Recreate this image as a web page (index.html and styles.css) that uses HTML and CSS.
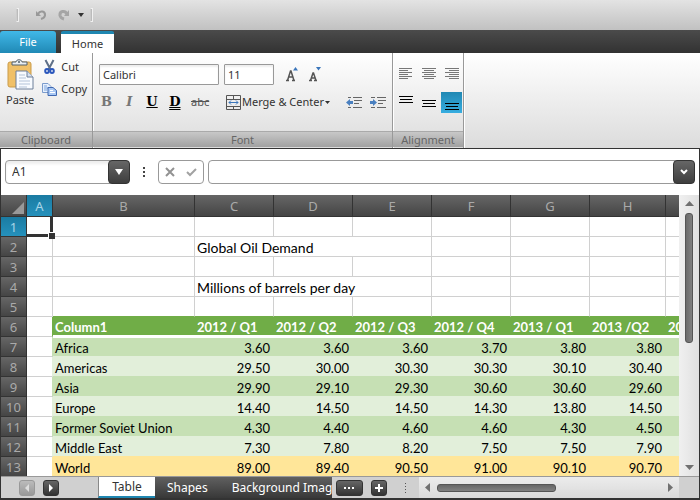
FILE: index.html
```
<!DOCTYPE html>
<html lang="en">
<head>
<meta charset="utf-8">
<title>Spreadsheet</title>
<link rel="stylesheet" href="styles.css">
</head>
<body>
<header class="quickbar">
  <span class="grip"></span>
  <button class="plain" aria-label="Undo"><svg width="12" height="12" viewBox="0 0 12 12"><path d="M1 2v5h5z" fill="#999"/><path d="M3 5C5 1 10.500 2 10 6.500c-.5 2-2 3-4 3.500" fill="none" stroke="#999" stroke-width="2"/></svg></button>
  <button class="plain" aria-label="Redo"><svg width="12" height="12" viewBox="0 0 12 12"><path d="M11 1v6H6z" fill="#a5a5a5"/><path d="M9 5C7 1 1.500 2 2 6.500c.5 2 2 3 4 3.500" fill="none" stroke="#a5a5a5" stroke-width="3"/></svg></button>
  <button class="plain more" aria-label="Customize"><svg width="6" height="4" viewBox="0 0 6 4"><path d="M0 0h6L3 4z" fill="#333"/></svg></button>
  <span class="grip"></span>
</header>
<nav class="tabs">
  <button class="file">File</button>
  <button class="home">Home</button>
</nav>
<section class="ribbon">
  <div class="group">
    <div class="tools clipboard">
      <button class="plain paste">
        <svg width="27" height="31" viewBox="0 0 27 31"><rect x="1" y="3" width="23" height="25" rx="2" fill="#f0c067" stroke="#c99b4b"/><path d="M5 6V3h4c0-3 6-3 6 0h5v3z" fill="#e8edf0" stroke="#53616c"/><circle cx="12" cy="3" r="1" fill="#53616c"/><path d="M9 12h11l6 6v12H9z" fill="#f8fbff" stroke="#6c7f99"/><path d="M20 12v6h6" fill="#d5e0ee" stroke="#6c7f99"/><path d="M12 16h6M12 19h7M12 22h11M12 25h11M12 28h8" stroke="#b3c3d8"/></svg>
        <span>Paste</span>
      </button>
      <div class="stack">
        <button class="plain"><svg width="15" height="16" viewBox="0 0 15 16"><path d="M3.500 1l5 9.500M11.500 1L6.500 10.500" stroke="#5f7088" stroke-width="2"/><ellipse cx="5" cy="12" rx="1.800" ry="2" fill="none" stroke="#2b57bc" stroke-width="2"/><ellipse cx="10" cy="12" rx="1.800" ry="2" fill="none" stroke="#2b57bc" stroke-width="2"/></svg>Cut</button>
        <button class="plain"><svg width="15" height="16" viewBox="0 0 15 16"><path d="M.5 2.500h5.500l3 3v6H.5z" fill="#e7f0fd" stroke="#7c9ccc"/><path d="M2 5h3M2 7h4M2 9h3" stroke="#7ba3dc"/><path d="M6 6.500h5l3.500 3v5H6z" fill="#a9c8f4" stroke="#3f68b1"/><path d="M8 9.500h3M8 11.500h5" stroke="#fff"/></svg>Copy</button>
      </div>
    </div>
    <div class="caption">Clipboard</div>
  </div>
  <div class="group">
    <div class="tools font">
      <div class="row">
        <input class="field family" aria-label="Font family" value="Calibri">
        <input class="field size" aria-label="Font size" value="11">
        <button class="plain" aria-label="Grow font"><svg width="13" height="15" viewBox="0 0 13 15"><path d="M1.500 13.500L4.500 4h.5l3 9.500M2.500 10h5M0 13.500h3M6 13.500h3" fill="none" stroke="#555" stroke-width="1.500"/><path d="M7 3.500L9.500 0 12 3.500z" fill="#3b76bb"/></svg></button>
        <button class="plain shrink" aria-label="Shrink font"><svg width="13" height="15" viewBox="0 0 13 15"><path d="M1.500 13.500L4 6h.5l2.500 7.500M2 11h4M0 13.500h3M5 13.500h3" fill="none" stroke="#555" stroke-width="1.500"/><path d="M7 0h5L9.500 3.500z" fill="#3b76bb"/></svg></button>
      </div>
      <div class="row styles">
        <button class="plain serif gray">B</button>
        <button class="plain serif gray italic">I</button>
        <button class="plain serif under">U</button>
        <button class="plain serif double">D</button>
        <button class="plain strike">abc</button>
        <button class="plain merge"><svg width="15" height="15" viewBox="0 0 15 15"><path d="M.5.5h14v14H.5zM0 4.500h15M0 11.500h15M7.500 0v4M7.500 11v4" fill="none" stroke="#555"/><path d="M3 7.500h9M5 5.500l-2 2 2 2M10 5.500l2 2-2 2" fill="none" stroke="#3b76bb"/></svg>Merge &amp; Center<svg width="5" height="3" viewBox="0 0 5 3"><path d="M0 0h5L2.500 3z" fill="#333"/></svg></button>
        <button class="plain" aria-label="Decrease indent"><svg width="16" height="11" viewBox="0 0 16 11"><path d="M2 .5h3M7 .5h9M8 3.500h8M8 6.500h5M2 10.500h3M7 10.500h9" stroke="#666"/><path d="M0 5.500L4 2v2h3v3H4v2z" fill="#4a80c0"/></svg></button>
        <button class="plain" aria-label="Increase indent"><svg width="16" height="11" viewBox="0 0 16 11"><path d="M1 .5h4M7 .5h9M8 3.500h8M8 6.500h5M1 10.500h4M7 10.500h9" stroke="#666"/><path d="M7 5.500L3 2v2H0v3h3v2z" fill="#4a80c0"/></svg></button>
      </div>
    </div>
    <div class="caption">Font</div>
  </div>
  <div class="group">
    <div class="tools align">
      <button class="plain" aria-label="Align left"><svg width="14" height="11" viewBox="0 0 14 11"><path d="M0 .5h13M0 2.500h9M0 4.500h13M0 6.500h9M0 8.500h13M0 10.500h9" stroke="#777"/></svg></button>
      <button class="plain" aria-label="Align center"><svg width="14" height="11" viewBox="0 0 14 11"><path d="M0 .5h14M2 2.500h10M0 4.500h14M2 6.500h10M0 8.500h14M2 10.500h10" stroke="#777"/></svg></button>
      <button class="plain" aria-label="Align right"><svg width="14" height="11" viewBox="0 0 14 11"><path d="M0 .5h14M4 2.500h10M0 4.500h14M4 6.500h10M0 8.500h14M4 10.500h10" stroke="#777"/></svg></button>
      <button class="plain" aria-label="Align top"><svg width="14" height="15" viewBox="0 0 14 15"><path d="M0 1.500h14M1 4.500h12M0 7.500h14" stroke="#000"/></svg></button>
      <button class="plain" aria-label="Align middle"><svg width="14" height="15" viewBox="0 0 14 15"><path d="M0 5.500h14M1 8.500h12M0 11.500h14" stroke="#000"/></svg></button>
      <button class="plain active" aria-label="Align bottom"><svg width="14" height="15" viewBox="0 0 14 15"><path d="M0 8.500h14M1 11.500h12M0 14.500h14" stroke="#000"/></svg></button>
    </div>
    <div class="caption">Alignment</div>
  </div>
</section>
<main class="workbook">
  <div class="formula">
    <div class="namebox"><input aria-label="Cell" value="A1"><button aria-label="Names"><svg width="8" height="6" viewBox="0 0 8 6"><path d="M0 0h8L4 6z" fill="#fff"/></svg></button></div>
    <span class="dots"></span>
    <div class="confirm">
      <button class="plain" aria-label="Cancel"><svg width="10" height="10" viewBox="0 0 10 10"><path d="M1 1l8 8M9 1L1 9" stroke="#929292" stroke-width="2"/></svg></button>
      <button class="plain" aria-label="Accept"><svg width="11" height="10" viewBox="0 0 11 10"><path d="M1 5l3 3 6-6" fill="none" stroke="#a2a2a2" stroke-width="2"/></svg></button>
    </div>
    <div class="expression"><input aria-label="Formula"><button aria-label="Expand"><svg width="8" height="6" viewBox="0 0 8 6"><path d="M1 1l3 3 3-3" fill="none" stroke="#fff" stroke-width="2"/></svg></button></div>
  </div>
  <div class="sheet">
    <div class="viewport">
      <table>
        <colgroup><col class="c-num"><col class="c-a"><col class="c-b"><col class="c-q"><col class="c-q"><col class="c-q"><col class="c-q"><col class="c-q"><col class="c-h"><col class="c-q"></colgroup>
        <thead><tr><th class="corner"><svg width="12" height="12" viewBox="0 0 12 12"><path d="M12 0v12H0z" fill="#999"/></svg></th><th class="sel">A</th><th>B</th><th>C</th><th>D</th><th>E</th><th>F</th><th>G</th><th>H</th><th></th></tr></thead>
        <tbody>
          <tr><th class="sel">1</th><td class="cursor"></td><td></td><td></td><td></td><td></td><td></td><td></td><td></td><td></td></tr>
          <tr><th>2</th><td></td><td></td><td class="title" colspan="3">Global Oil Demand</td><td></td><td></td><td></td><td></td></tr>
          <tr><th>3</th><td></td><td></td><td></td><td></td><td></td><td></td><td></td><td></td><td></td></tr>
          <tr><th>4</th><td></td><td></td><td class="title" colspan="3">Millions of barrels per day</td><td></td><td></td><td></td><td></td></tr>
          <tr class="last"><th>5</th><td></td><td></td><td></td><td></td><td></td><td></td><td></td><td></td><td></td></tr>
          <tr class="heading"><th>6</th><td></td><td>Column1</td><td>2012 / Q1</td><td>2012 / Q2</td><td>2012 / Q3</td><td>2012 / Q4</td><td>2013 / Q1</td><td>2013 /Q2</td><td>2013 / Q3</td></tr>
          <tr class="odd first"><th>7</th><td></td><td>Africa</td><td>3.60</td><td>3.60</td><td>3.60</td><td>3.70</td><td>3.80</td><td>3.80</td><td></td></tr>
          <tr class="even"><th>8</th><td></td><td>Americas</td><td>29.50</td><td>30.00</td><td>30.30</td><td>30.30</td><td>30.10</td><td>30.40</td><td></td></tr>
          <tr class="odd"><th>9</th><td></td><td>Asia</td><td>29.90</td><td>29.10</td><td>29.30</td><td>30.60</td><td>30.60</td><td>29.60</td><td></td></tr>
          <tr class="even"><th>10</th><td></td><td>Europe</td><td>14.40</td><td>14.50</td><td>14.50</td><td>14.30</td><td>13.80</td><td>14.50</td><td></td></tr>
          <tr class="odd"><th>11</th><td></td><td>Former Soviet Union</td><td>4.30</td><td>4.40</td><td>4.60</td><td>4.60</td><td>4.30</td><td>4.50</td><td></td></tr>
          <tr class="even before-total"><th>12</th><td></td><td>Middle East</td><td>7.30</td><td>7.80</td><td>8.20</td><td>7.50</td><td>7.50</td><td>7.90</td><td></td></tr>
          <tr class="total"><th>13</th><td></td><td>World</td><td>89.00</td><td>89.40</td><td>90.50</td><td>91.00</td><td>90.10</td><td>90.70</td><td></td></tr>
        </tbody>
      </table>
    </div>
    <div class="vscroll">
      <svg width="9" height="5" viewBox="0 0 9 5"><path d="M0 5h9L4.500 0z" fill="#707070"/></svg>
      <div class="track"><div class="thumb"></div></div>
      <svg width="9" height="5" viewBox="0 0 9 5"><path d="M0 0h9L4.500 5z" fill="#707070"/></svg>
    </div>
  </div>
  <footer class="bottom">
    <div class="sheetnav">
      <button class="mini off" aria-label="Previous sheet"><svg width="4" height="8" viewBox="0 0 4 8"><path d="M4 0v8L0 4z" fill="#ddd"/></svg></button>
      <button class="mini" aria-label="Next sheet"><svg width="4" height="8" viewBox="0 0 4 8"><path d="M0 0v8l4-4z" fill="#fff"/></svg></button>
    </div>
    <div class="sheettabs"><button class="current">Table</button><button>Shapes</button><button>Background Image</button></div>
    <div class="sheetmore">
      <button class="mini wide" aria-label="All sheets"><svg width="11" height="2" viewBox="0 0 11 2"><path d="M0 1h2M4 1h2M8 1h2" stroke="#fff" stroke-width="2"/></svg></button>
      <button class="mini" aria-label="Add sheet"><svg width="8" height="8" viewBox="0 0 8 8"><path d="M0 4h8M4 0v8" stroke="#fff" stroke-width="2"/></svg></button>
      <span class="dots small"></span>
    </div>
    <div class="hscroll">
      <svg width="5" height="9" viewBox="0 0 5 9"><path d="M5 0v9L0 4.500z" fill="#707070"/></svg>
      <div class="track"><div class="thumb"></div></div>
      <svg width="5" height="9" viewBox="0 0 5 9"><path d="M0 0v9l5-4.500z" fill="#707070"/></svg>
    </div>
  </footer>
</main>
</body>
</html>
```
FILE: styles.css
```
* { box-sizing: border-box; }
body {
  margin: 0;
  height: 100vh;
  display: flex;
  flex-direction: column;
  overflow: hidden;
  background: #fff;
  color: #333;
  font: 11px/16px "Noto Sans", "Open Sans", sans-serif;
}
button, input { font: inherit; color: inherit; margin: 0; }
button { padding: 0; border: 0; white-space: nowrap; }
svg { display: block; flex: none; }
.plain { display: flex; align-items: center; background: none; }

.quickbar {
  height: 30px;
  flex: none;
  display: flex;
  align-items: center;
  padding-left: 16px;
  background: linear-gradient(#e3e3e3, #c1c1c1);
}
.grip { width: 3px; height: 14px; border: 1px solid #f0f0f0; border-left-color: #ccc; margin-right: 16px; background: #bbb; }
.quickbar .plain { margin-right: 11px; }
.quickbar .more { margin: 0 6px 0 -3px; }

.tabs { height: 23px; flex: none; display: flex; gap: 5px; background: linear-gradient(#4b4b4b, #323232); }
.file {
  width: 56px;
  margin-top: 1px;
  border-radius: 3px 3px 0 0;
  background: linear-gradient(#41b8e8, #2089b5);
  color: #fff;
}
.home { width: 53px; margin-top: 1px; border-top: 3px solid #1f87b1; border-radius: 2px 2px 0 0; background: #fff; }

.ribbon { flex: none; display: flex; height: 95px; background: linear-gradient(#fff, #dcdcdc); }
.group { display: flex; flex-direction: column; border-right: 1px solid #999; box-shadow: 1px 0 #fff; }
.tools { flex: 1; }
.caption {
  height: 16px;
  margin-bottom: 1px;
  border-top: 1px solid #aaa;
  background: linear-gradient(#c8c8c8, #a1a1a1);
  color: #666;
  text-align: center;
  line-height: 15px;
}
.clipboard { width: 92px; display: flex; gap: 8px; padding: 6px 0 0 6px; align-items: flex-start; }
.paste { flex-direction: column; gap: 2px; }
.stack { display: flex; flex-direction: column; gap: 6px; }
.stack .plain { gap: 4px; }
.font { width: 299px; padding: 11px 6px 0; }
.row { display: flex; align-items: center; gap: 5px; }
.row .field { height: 21px; padding: 0 3px; border: 1px solid #999; border-radius: 1px; background: #fff; box-shadow: inset 0 2px 2px #eee; }
.row .family { width: 120px; }
.row .size { width: 50px; margin-right: 7px; }
.row .shrink { margin-left: 5px; }
.styles { margin-top: 8px; gap: 8px; }
.serif { width: 15px; height: 18px; justify-content: center; font: bold 13px/14px "DejaVu Serif", serif; color: #000; }
.styles .gray { color: #777; }
.italic { font-style: italic; }
.under { text-decoration: underline; }
.double { text-decoration: underline double; }
.strike { width: 20px; justify-content: center; text-decoration: line-through; color: #555; }
.merge { margin: 0 8px; gap: 1px; }
.align {
  display: grid;
  grid-template-columns: repeat(3, 21px);
  grid-template-rows: 21px 21px;
  gap: 8px 2px;
  padding: 10px 1px 0 2px;
}
.align .plain { justify-content: center; }
.align .active { background: linear-gradient(#2088b3, #37ade0); }

.workbook { flex: 1; min-height: 0; display: flex; flex-direction: column; border: 1px solid #333; border-bottom-width: 2px; }
.formula { flex: none; display: flex; align-items: center; height: 46px; padding: 0 4px; font-size: 12px; }
.formula input { flex: 1; min-width: 0; border: 0; background: none; padding: 0 6px; outline: 0; }
.namebox, .confirm, .expression { display: flex; height: 24px; border: 1px solid #999; border-radius: 4px; }
.namebox { width: 125px; box-shadow: inset 0 3px 3px #eee; }
.namebox button, .expression button {
  width: 22px;
  margin: -1px;
  display: flex;
  align-items: center;
  justify-content: center;
  border: 1px solid #333;
  border-radius: 4px;
  background: linear-gradient(#666, #3e3e3e);
}
.dots { width: 2px; height: 10px; margin: 0 13px; background: repeating-linear-gradient(#444 0 2px, transparent 2px 4px); }
.confirm { width: 46px; align-items: center; justify-content: space-around; }
.expression { flex: 1; margin-left: 4px; }

.sheet { flex: 1; min-height: 0; display: flex; }
.viewport { flex: 1; min-width: 0; overflow: hidden; color: #000; font: 13px/16px Lato, "Noto Sans", sans-serif; }
table { width: 744px; table-layout: fixed; border-collapse: separate; border-spacing: 0; }
.c-num { width: 26px; }
.c-a { width: 26px; }
.c-b { width: 142px; }
.c-q { width: 79px; }
.c-h { width: 76px; }
th {
  height: 20px;
  padding: 0;
  border: 0 solid #333;
  border-width: 0 1px 1px 0;
  background: linear-gradient(#666, #454545);
  color: #aaa;
  font: 13px/16px "Noto Sans", sans-serif;
}
thead th { height: 22px; }
th.sel { background: linear-gradient(#1b7ba2, #2591bc); color: #a9d5e7; }
.corner svg { margin: 4px 2px 0 auto; }
td { height: 20px; padding: 2px 4px 0 2px; border: 0 solid #d0d0d0; border-width: 0 1px 1px 0; white-space: nowrap; line-height: 16px; }
.title { font-size: 14px; }
.cursor { position: relative; }
.cursor::before { content: ""; position: absolute; inset: -1px; border: 1px solid #333; border-right-width: 3px; border-bottom-width: 3px; }
.cursor::after { content: ""; position: absolute; right: -3px; bottom: -3px; width: 6px; height: 6px; background: #333; border: 1px solid #fff; border-width: 1px 0 0 1px; }
.last td + td { border-bottom-color: #70ad47; }
.heading { --fill: #70ad47; --next: #fff; }
.odd { --fill: #c6e0b4; --next: #e2efda; }
.even { --fill: #e2efda; --next: #c6e0b4; }
.before-total { --next: #ffe699; }
.total { --fill: #ffe699; --next: #ffe699; }
.heading td, .odd td, .even td, .total td { border-right-color: var(--fill); }
.heading td + td, .odd td + td, .even td + td, .total td + td { background: var(--fill); border-right: 0; border-bottom-color: var(--next); }
.heading td { font-weight: bold; color: #fff; }
.heading td + td { border-bottom-width: 2px; }
.first td + td { padding-top: 1px; border-top: 1px solid #fff; }
.odd td + td + td, .even td + td + td, .total td + td + td { text-align: right; }

.vscroll { width: 20px; flex: none; display: flex; flex-direction: column; align-items: center; gap: 7px; padding: 6px 0; background: linear-gradient(90deg, #f0f0f0, #e0e0e0); }
.vscroll .track { flex: 1; width: 8px; }
.vscroll .thumb { height: 53%; border: 1px solid #555; border-radius: 3px; background: linear-gradient(90deg, #6b6b6b, #808080); }

.bottom { flex: none; height: 22px; display: flex; align-items: stretch; border-top: 1px solid #999; background: #d0d0d0; }
.sheetnav { width: 97px; display: flex; align-items: center; gap: 8px; padding-left: 18px; }
.mini { width: 16px; height: 16px; display: flex; align-items: center; justify-content: center; border: 1px solid #333; border-radius: 3px; background: linear-gradient(#666, #333); }
.mini.wide { width: 27px; }
.mini.off { border-color: #999; background: linear-gradient(#bbb, #999); }
.sheettabs { width: 234px; flex: none; display: flex; overflow: hidden; }
.sheettabs button { flex: none; padding: 0 12px; background: linear-gradient(#606060, #383838); color: #fff; font-size: 12px; line-height: 18px; }
.sheettabs .current { width: 57px; border-left: 1px solid #888; border-bottom: 2px solid #1f87b1; background: #fff; color: #333; }
.sheetmore { display: flex; align-items: center; gap: 8px; padding-left: 4px; width: 87px; }
.dots.small { width: 1px; margin: 0 10px; background: repeating-linear-gradient(#555 0 1px, transparent 1px 3px); }
.hscroll { flex: 1; display: flex; align-items: center; gap: 7px; margin-right: 20px; padding: 0 6px; background: linear-gradient(#ececec, #dadada); }
.hscroll .track { flex: 1; height: 8px; }
.hscroll .thumb { width: 53%; height: 8px; border: 1px solid #555; border-radius: 3px; background: linear-gradient(#666, #808080); }
```
